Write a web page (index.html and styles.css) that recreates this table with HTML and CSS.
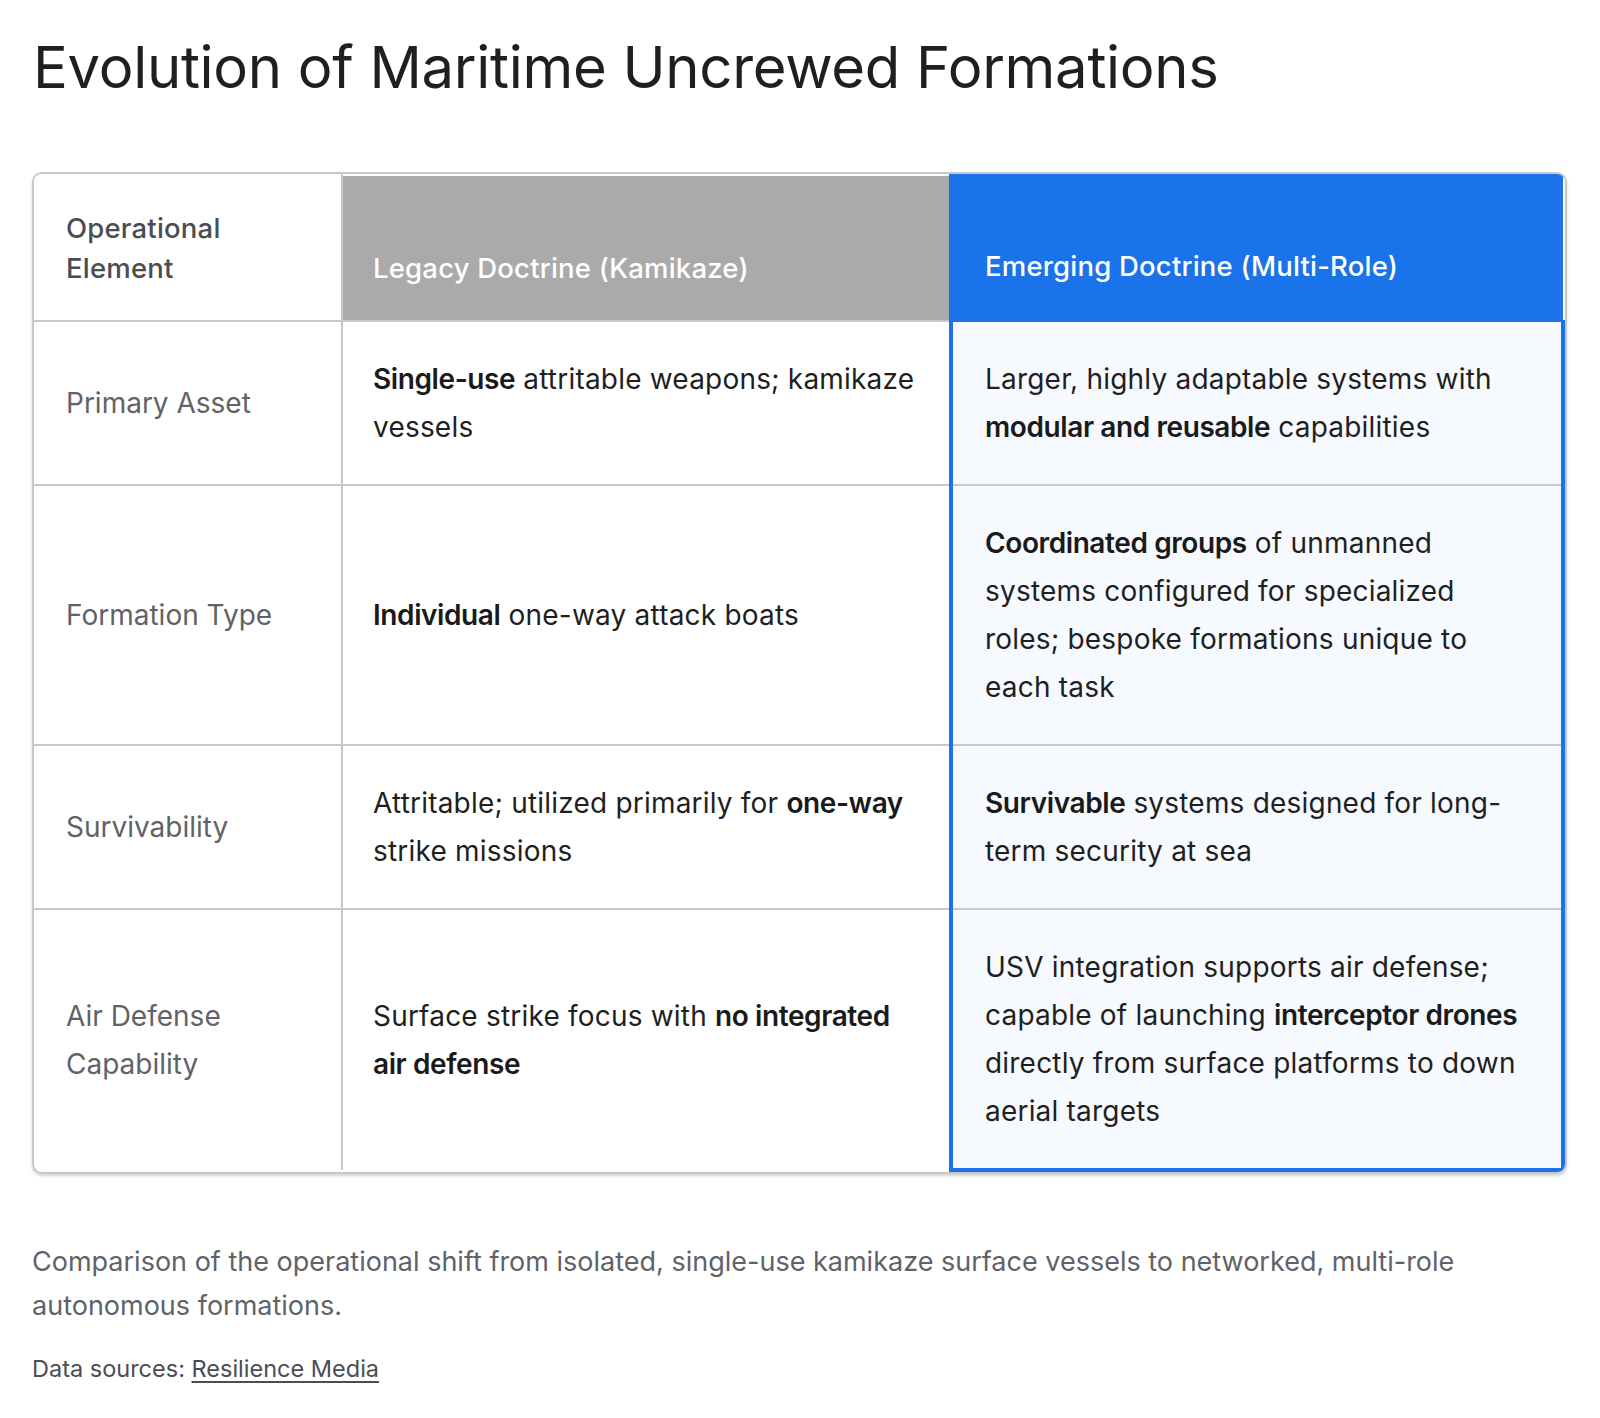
FILE: index.html
```html
<!DOCTYPE html>
<html lang="en">
<head>
<meta charset="utf-8">
<title>Evolution of Maritime Uncrewed Formations</title>
<link rel="stylesheet" href="styles.css">
</head>
<body>
<main class="page">
  <h1 class="title">Evolution of Maritime Uncrewed Formations</h1>
  <div class="table-wrap">
    <table class="compare">
      <thead>
        <tr>
          <th class="col-label">Operational<br>Element</th>
          <th class="col-legacy">Legacy Doctrine (Kamikaze)</th>
          <th class="col-emerging">Emerging Doctrine (Multi-Role)</th>
        </tr>
      </thead>
      <tbody>
        <tr>
          <td class="label">Primary Asset</td>
          <td class="mid"><b>Single-use</b> attritable weapons; kamikaze vessels</td>
          <td class="hl">Larger, highly adaptable systems with <b>modular and reusable</b> capabilities</td>
        </tr>
        <tr>
          <td class="label">Formation Type</td>
          <td class="mid"><b>Individual</b> one-way attack boats</td>
          <td class="hl"><b>Coordinated groups</b> of unmanned systems configured for specialized roles; bespoke formations unique to each task</td>
        </tr>
        <tr>
          <td class="label">Survivability</td>
          <td class="mid">Attritable; utilized primarily for <b>one-way</b> strike missions</td>
          <td class="hl"><b>Survivable</b> systems designed for long-term security at sea</td>
        </tr>
        <tr class="last">
          <td class="label">Air Defense Capability</td>
          <td class="mid">Surface strike focus with <b>no integrated air defense</b></td>
          <td class="hl">USV integration supports air defense; capable of launching <b>interceptor drones</b> directly from surface platforms to down aerial targets</td>
        </tr>
      </tbody>
    </table>
  </div>
  <p class="caption">Comparison of the operational shift from isolated, single-use kamikaze surface vessels to networked, multi-role autonomous formations.</p>
  <p class="sources">Data sources: <a href="#" class="src-link">Resilience Media</a></p>
</main>
</body>
</html>
```

FILE: styles.css
```css
* { box-sizing: border-box; }

html, body {
  margin: 0;
  padding: 0;
  background: #ffffff;
}

body {
  font-family: Inter, Roboto, "Noto Sans", "Liberation Sans", sans-serif;
  color: #202124;
}

.page {
  padding: 25px 33px 40px 32px;
}

.title {
  margin: 0 0 63px 1px;
  font-size: 58px;
  font-weight: 400;
  line-height: 84px;
  color: #1f1f1f;
  letter-spacing: -0.3px;
}

.table-wrap {
  border: 2px solid #c8c8c8;
  border-radius: 10px;
  overflow: hidden;
  box-shadow: 0 2px 3px rgba(0, 0, 0, 0.18);
}

.compare {
  width: 100%;
  border-collapse: collapse;
  table-layout: fixed;
}

.compare th,
.compare td {
  border: 2px solid #c8c8c8;
  padding: 33px 32px;
  text-align: left;
}

.compare tr > :first-child { border-left: 0; }
.compare tr > :last-child { border-right: 0; }
.compare thead tr > * { border-top: 0; }
.compare tr.last > * { border-bottom: 0; }

.col-label { width: 308px; }
.col-legacy { width: 609px; }

.compare th {
  vertical-align: bottom;
  font-size: 27.5px;
  line-height: 40px;
  font-weight: 500;
  letter-spacing: 0.2px;
  padding-top: 34px;
  padding-bottom: 32px;
}

.compare th.col-legacy,
.compare td.mid {
  padding-left: 30px;
}

.col-label {
  color: #4a4d52;
  background: #ffffff;
}

.col-legacy {
  background: #aaaaaa;
  color: #ffffff;
  box-shadow: inset 0 2px 0 #ffffff;
}

.compare th.col-emerging {
  background: #1a73e8;
  color: #ffffff;
  border-color: #1a73e8;
  border-left: 4px solid #1a73e8;
  padding-bottom: 34px;
}

.compare td {
  vertical-align: middle;
  font-size: 28px;
  line-height: 48px;
  letter-spacing: 0.2px;
  color: #1f1f1f;
}

.compare td b {
  font-weight: 600;
  letter-spacing: -0.4px;
  color: #1a1a1a;
}

.compare td.label {
  color: #5f6368;
  letter-spacing: 0;
}

.compare td.hl {
  background: #f6f9fd;
  border-left: 4px solid #1a73e8;
  border-right: 4px solid #1a73e8;
}

.compare tr.last td.hl {
  border-bottom: 4px solid #1a73e8;
}

.caption {
  margin: 66px 0 0 0;
  font-size: 27px;
  line-height: 44px;
  letter-spacing: 0;
  color: #5f6368;
}

.sources {
  margin: 23px 0 0 0;
  font-size: 23.5px;
  line-height: 36px;
  color: #4a4d52;
}

.src-link {
  color: #4a4d52;
  text-decoration: underline;
  text-underline-offset: 4px;
}
```
